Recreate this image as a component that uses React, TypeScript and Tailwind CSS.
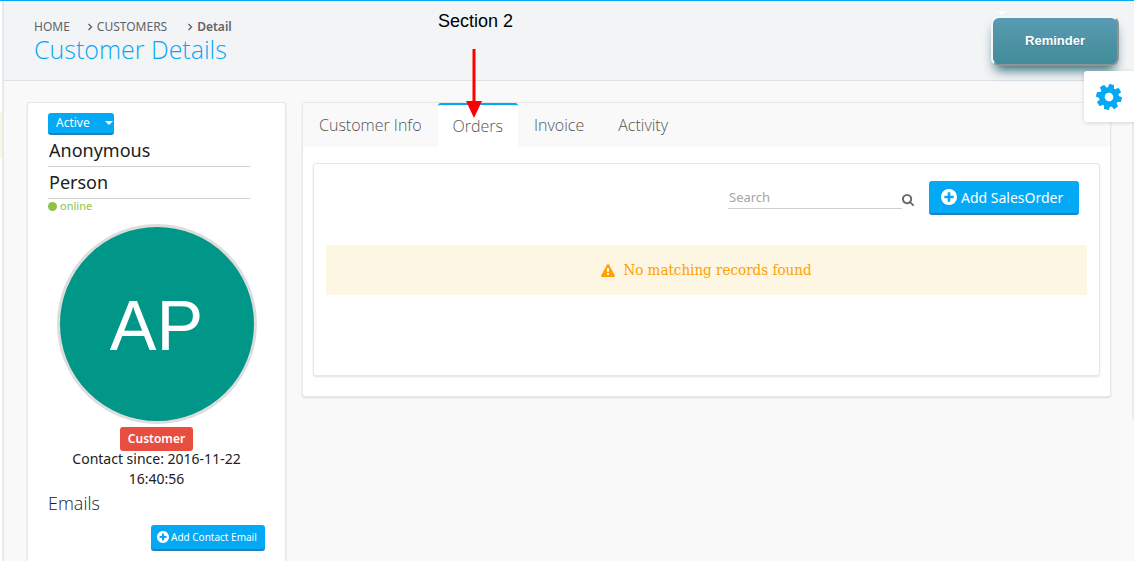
import React from "react";

const PATHS = {
  cog: "M1024 896q0 106-75 181t-181 75-181-75-75-181 75-181 181-75 181 75 75 181zm512-109v222q0 12-8 23t-20 13l-185 28q-19 54-39 91 35 50 107 138 10 12 10 25t-9 23q-27 37-99 108t-94 71q-12 0-26-9l-138-108q-44 23-91 38-16 136-29 186-7 28-36 28h-222q-14 0-24.500-8.500t-11.500-21.500l-28-184q-49-16-90-37l-141 107q-10 9-25 9-14 0-25-11-126-114-165-168-7-10-7-23 0-12 8-23 15-21 51-66.500t54-70.500q-27-50-41-99l-183-27q-13-2-21-12.500t-8-23.500v-222q0-12 8-23t19-13l186-28q14-46 39-92-40-57-107-138-10-12-10-24 0-10 9-23 26-36 98.500-107.500t94.500-71.500q13 0 26 10l138 107q44-23 91-38 16-136 29-186 7-28 36-28h222q14 0 24.500 8.500t11.500 21.500l28 184q49 16 90 37l142-107q9-9 24-9 13 0 25 10 129 119 165 170 7 8 7 22 0 12-8 23-15 21-51 66.500t-54 70.500q26 50 41 98l183 28q13 2 21 12.500t8 23.500z",
  plus: "M1216 960v-128q0-26-19-45t-45-19h-256v-256q0-26-19-45t-45-19h-128q-26 0-45 19t-19 45v256h-256q-26 0-45 19t-19 45v128q0 26 19 45t45 19h256v256q0 26 19 45t45 19h128q26 0 45-19t19-45v-256h256q26 0 45-19t19-45zm320-64q0 209-103 385.500t-279.500 279.500-385.500 103-385.500-103-279.500-279.500-103-385.500 103-385.500 279.500-279.500 385.500-103 385.500 103 279.500 279.500 103 385.500z",
  search: "M1152 832q0-185-131.500-316.500t-316.500-131.500-316.500 131.500-131.500 316.500 131.500 316.500 316.500 131.500 316.500-131.500 131.500-316.500zm512 832q0 52-38 90t-90 38q-54 0-90-38l-343-342q-179 124-399 124-143 0-273.500-55.500t-225-150-150-225-55.500-273.500 55.500-273.500 150-225 225-150 273.500-55.500 273.500 55.500 225 150 150 225 55.500 273.500q0 220-124 399l343 343q37 37 37 90z",
  warning: "M1024 1375v-190q0-14-9.500-23.500t-22.500-9.500h-192q-13 0-22.500 9.500t-9.500 23.500v190q0 14 9.500 23.500t22.500 9.500h192q13 0 22.500-9.500t9.500-23.500zm-2-374l18-459q0-12-10-19-13-11-24-11h-220q-11 0-24 11-10 7-10 21l17 457q0 10 10 16.500t24 6.500h185q14 0 23.500-6.500t10.500-16.500zm-14-934l768 1408q35 63-2 126-17 29-46.500 46t-63.500 17h-1536q-34 0-63.500-17t-46.500-46q-37-63-2-126l768-1408q17-31 47-49t65-18 65 18 47 49z",
};

function Icon({ name, viewBox, className }: { name: keyof typeof PATHS; viewBox: string; className: string }) {
  return (
    <svg viewBox={viewBox} fill="currentColor" fillRule="evenodd" className={className} aria-hidden="true">
      <path d={PATHS[name]} />
    </svg>
  );
}

function Chevron() {
  return (
    <svg viewBox="0 0 6 8" fill="none" stroke="currentColor" strokeWidth="1.400" className="mr-1 h-2 w-1.5" aria-hidden="true">
      <path d="M1.500 1 4.500 4 1.500 7" />
    </svg>
  );
}

function Tab({ label, active = false }: { label: string; active?: boolean }) {
  return (
    <button
      type="button"
      role="tab"
      aria-selected={active}
      className={
        active
          ? "h-11 rounded-t-[3px] border-t-2 border-[#03a9f4] bg-white px-[15px]"
          : "h-11 px-4 last:pl-[18px]"
      }
    >
      {label}
    </button>
  );
}

const CARD = "rounded-[3px] border border-[#e7e8ea] bg-white shadow-[0_1px_2px_rgba(0,0,0,0.12)]";
const PRIMARY = "flex items-center rounded-[3px] border-b-2 border-[#2080bd] bg-[#03a9f4] text-white";

export default function App() {
  return (
    <div className="flex h-screen overflow-hidden border-t border-[#03a9f4] bg-[#f9f9f9] font-['Noto_Sans','Open_Sans',sans-serif] text-[#212121]">
      <div className="w-1 shrink-0 border-r-2 border-[#e7ebee] bg-white pt-[111px]">
        <div className="h-[46px] bg-[#fff8e1]" />
      </div>

      <div className="relative min-w-0 flex-1">
        <header className="flex h-20 items-start justify-between border-b border-[#dce1e8] bg-[#f3f4f6] pt-[15px] pr-[15px] pl-[30px]">
          <div className="pt-0.5">
            <nav aria-label="Breadcrumb" className="flex h-[18px] items-center text-[12px] leading-4 text-[#5f6468]">
              <a href="#home" className="mr-[17px]">HOME</a>
              <Chevron />
              <a href="#customers" className="mr-5">CUSTOMERS</a>
              <Chevron />
              <span className="font-semibold">Detail</span>
            </nav>
            <h1 className="font-['Open_Sans',sans-serif] text-[25px] leading-[26px] font-light text-[#03a9f4]">Customer Details</h1>
          </div>
          <button
            type="button"
            className="h-[50px] w-32 rounded-lg border-2 border-t-[#f4f6f8] border-r-[#929292] border-b-[#929292] border-l-[#f4f6f8] bg-linear-to-b from-[#599bb3] to-[#408c99] font-['Liberation_Sans',Arial,sans-serif] text-[13px] font-bold text-white shadow-[0_8px_12px_-4px_#276873] [text-shadow:0_1px_0_#3d768a]"
          >
            Reminder
          </button>
        </header>

        <main className="flex items-start gap-4 pt-[21px] pr-[23px] pl-[23px]">
          <aside className={`${CARD} h-[520px] w-[259px] shrink-0 px-5 pt-2.5`}>
            <button type="button" className={`${PRIMARY} h-[22px] w-[66px] justify-between pr-px pl-2 text-[12px]`}>
              Active
              <svg viewBox="0 0 8 4" fill="currentColor" className="h-1 w-2" aria-hidden="true">
                <path d="M0 0h8L4 4z" />
              </svg>
            </button>
            <input
              aria-label="First name"
              defaultValue="Anonymous"
              className="block h-8 w-[202px] border-b border-[#d2d2d2] px-px pb-0.5 text-[18px] outline-none"
            />
            <input
              aria-label="Last name"
              defaultValue="Person"
              className="block h-8 w-[202px] border-b border-[#d2d2d2] px-px pb-0.5 text-[18px] outline-none"
            />
            <div className="flex h-4 items-center gap-[3px] pb-px text-[11px] text-[#8bc34a]">
              <span className="size-[9px] rounded-full bg-[#8bc34a]" />
              online
            </div>
            <div className="mt-[9px] flex flex-col items-center">
              <div className="flex size-[200px] items-center justify-center rounded-full border-[3px] border-[#ddd] bg-[#009688] pt-1 font-['Liberation_Sans',Arial,sans-serif] text-[70px] text-white">
                AP
              </div>
              <span className="mt-[3px] h-6 rounded-[3px] bg-[#e84e40] px-2 text-[12px] leading-6 font-semibold text-white">
                Customer
              </span>
              <p className="-mt-0.5 w-[200px] text-center text-[14px] leading-5">Contact since: 2016-11-22 16:40:56</p>
            </div>
            <h2 className="mt-0.5 font-['Open_Sans',sans-serif] text-[18px] leading-6 font-light">Emails</h2>
            <div className="mt-2.5 flex justify-end">
              <button type="button" className={`${PRIMARY} h-[26px] w-[114px] gap-0.5 px-1.5 text-[10px] whitespace-nowrap`}>
                <Icon name="plus" viewBox="0 128 1536 1536" className="size-3" />
                Add Contact Email
              </button>
            </div>
          </aside>

          <section className={`${CARD} min-w-0 flex-1`}>
            <div role="tablist" className="flex bg-[#f9f9f9] font-['Open_Sans',sans-serif] text-[16px] font-light text-[#555]">
              <Tab label="Customer Info" />
              <Tab label="Orders" active />
              <Tab label="Invoice" />
              <Tab label="Activity" />
            </div>
            <div className="px-2.5 pt-4 pb-5">
              <div className={`${CARD} h-[213px] px-3 pt-[17px]`}>
                <div className="flex justify-end pr-2">
                  <input
                    type="search"
                    aria-label="Search"
                    placeholder="Search"
                    className="h-7 w-[174px] border-b border-[#cfcfcf] px-px pt-1 text-[13px] outline-none placeholder:text-[#a5a5a5]"
                  />
                  <button type="button" aria-label="Run search" className="mr-[15px] flex h-[34px] items-center pt-1 text-[#666]">
                    <Icon name="search" viewBox="0 128 1664 1664" className="size-3" />
                  </button>
                  <button type="button" className={`${PRIMARY} h-[34px] w-[150px] gap-1 px-3 text-[14px] whitespace-nowrap`}>
                    <Icon name="plus" viewBox="0 128 1536 1536" className="size-4" />
                    Add SalesOrder
                  </button>
                </div>
                <div
                  role="status"
                  className="mt-[30px] flex h-[50px] items-center justify-center gap-2 bg-[#fdf6e2] font-['DejaVu_Serif_Condensed','DejaVu_Serif',serif] text-[15px] text-[#ffa000]"
                >
                  <Icon name="warning" viewBox="0 0 1792 1664" className="h-[13px] w-3.5" />
                  No matching records found
                </div>
              </div>
            </div>
          </section>
        </main>

        <div className="absolute top-[120px] right-0 h-[298px] w-0.5 bg-[#ebebeb]" />

        <div className="absolute top-0 left-[434px] flex w-20 flex-col font-['Liberation_Sans',Arial,sans-serif] text-[18px] text-black">
          <span className="mt-2 leading-6 whitespace-nowrap">Section 2</span>
          <svg viewBox="0 0 16 70" className="mt-4 ml-7 h-[70px] w-4" aria-hidden="true">
            <path d="M6.500 0h3v52H16L8 69 0 52h6.500z" fill="#ff0000" />
          </svg>
        </div>

        <svg viewBox="0 0 8 4" className="absolute top-2.5 right-[128px] h-1 w-2 text-white" fill="currentColor" aria-hidden="true">
          <path d="M0 0h8L4 4z" />
        </svg>

        <button
          type="button"
          aria-label="Settings"
          className="absolute top-[70px] right-0 flex h-[51px] w-[50px] items-center justify-center rounded-l-[3px] bg-white text-[#03a9f4] shadow-[0_1px_4px_rgba(0,0,0,0.15)]"
        >
          <Icon name="cog" viewBox="0 128 1536 1536" className="size-[26px] rotate-12" />
        </button>
      </div>
    </div>
  );
}
